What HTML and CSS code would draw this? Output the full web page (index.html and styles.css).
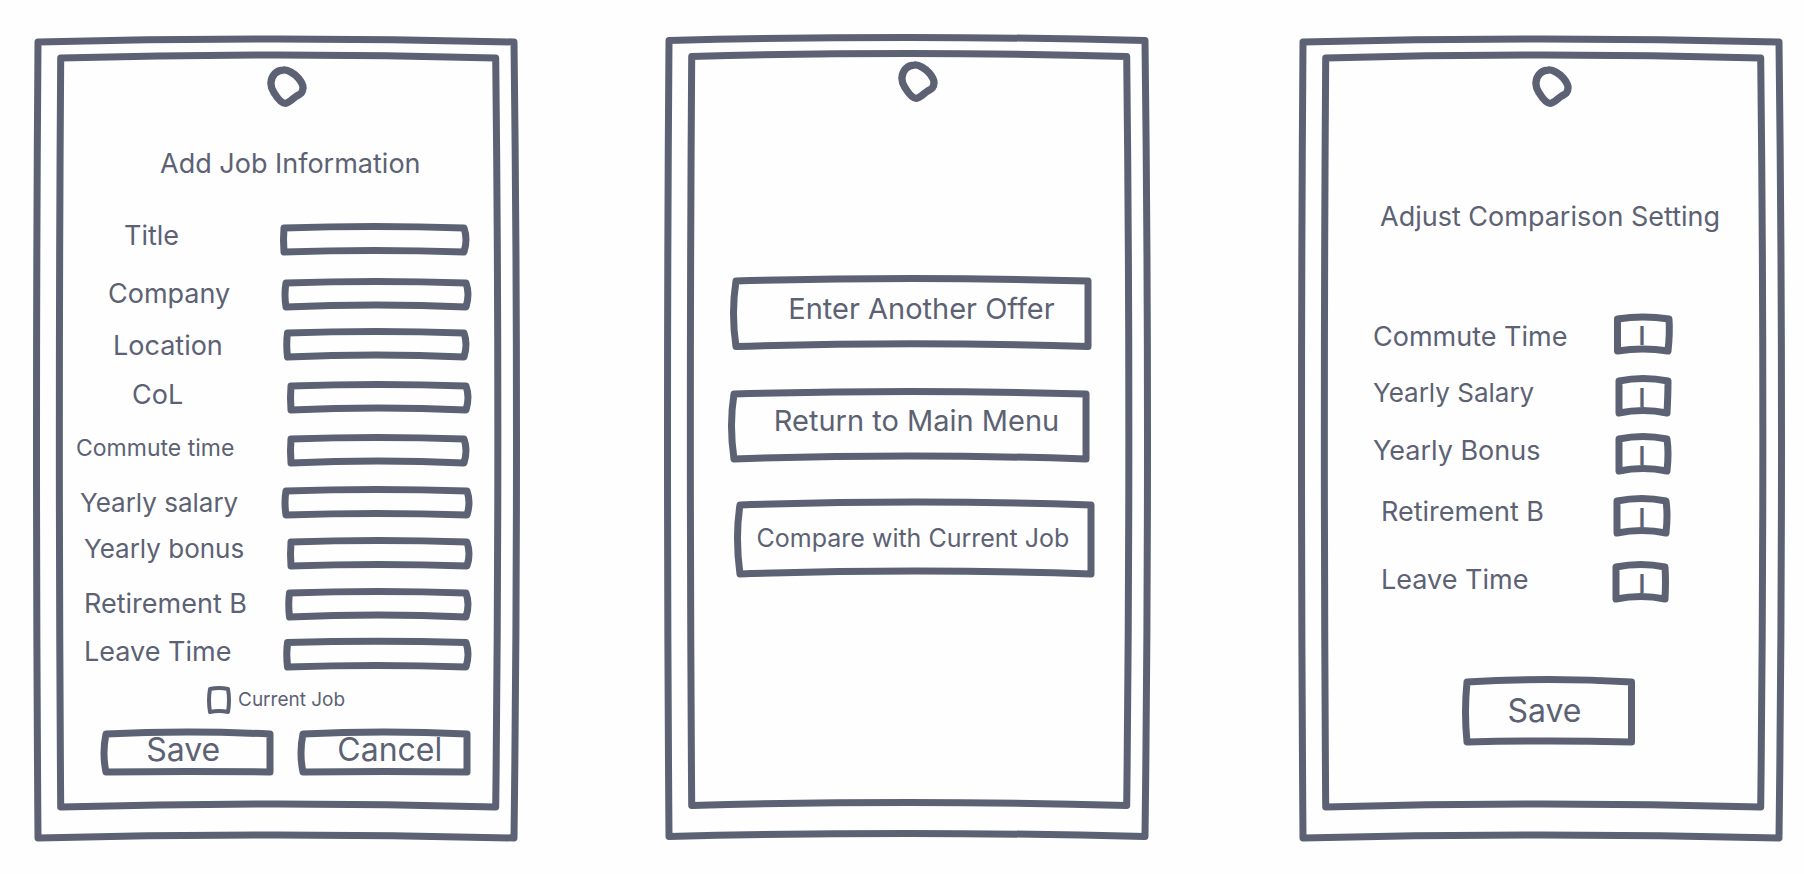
FILE: index.html
```html
<!DOCTYPE html>
<html lang="en">
<head>
<meta charset="utf-8">
<title>Job comparison wireframes</title>
<link rel="stylesheet" href="styles.css">
</head>
<body>
<main class="board">

<section class="phone">
  <svg class="sketch" viewBox="0 0 481 801" preserveAspectRatio="none" aria-hidden="true"><path d="M2,4Q241,-2 478,4Q483,400 478,800Q241,794 2,800Q-1,400 2,4Z"/><path d="M24.7,20Q242,14 459.7,20Q464,395 459.7,769Q242,763 24.7,769Q22,395 24.7,20Z"/></svg>
  <svg class="camera" viewBox="0 0 118 123" aria-hidden="true"><path d="M48,12C62,10 82,24 92,35C101,46 108,55 107,66C106,82 98,84 88,90C74,99 64,112 53,112C42,112 28,93 20,80C14,71 10,62 11,50C12,28 28,13 48,12Z"/></svg>
  <form class="job">
    <h1 class="title job-title">Add Job Information</h1>
    <div class="job-grid">
      <div class="job-labels">
        <label class="in-5" for="f1">Title</label>
        <label class="in-3" for="f2">Company</label>
        <label class="in-4" for="f3">Location</label>
        <label class="in-6" for="f4">CoL</label>
        <label class="small" for="f5">Commute time</label>
        <label class="in-1 medium" for="f6">Yearly salary</label>
        <label class="in-2 medium" for="f7">Yearly bonus</label>
        <label class="in-2" for="f8">Retirement B</label>
        <label class="in-2" for="f9">Leave Time</label>
      </div>
      <div class="job-fields">
        <div class="box"><svg class="sketch" viewBox="0 0 192 33" preserveAspectRatio="none" aria-hidden="true"><path d="M4,5Q94,2 184,5Q188,16 184,29Q94,26 4,29Q3,16 4,5Z"/></svg><input id="f1" type="text"></div>
        <div class="box"><svg class="sketch" viewBox="0 0 192 33" preserveAspectRatio="none" aria-hidden="true"><path d="M6,5Q96,2 186,5Q190,16 186,29Q96,25 6,29Q4,16 6,5Z"/></svg><input id="f2" type="text"></div>
        <div class="box"><svg class="sketch" viewBox="0 0 192 33" preserveAspectRatio="none" aria-hidden="true"><path d="M7.5,5Q96,2 184,5Q188,16 184,29Q96,25 7.5,29Q6,16 7.5,5Z"/></svg><input id="f3" type="text"></div>
        <div class="box"><svg class="sketch" viewBox="0 0 192 33" preserveAspectRatio="none" aria-hidden="true"><path d="M11,5Q98,2 186,5Q190,16 186,29Q98,25 11,29Q10,16 11,5Z"/></svg><input id="f4" type="text"></div>
        <div class="box"><svg class="sketch" viewBox="0 0 192 33" preserveAspectRatio="none" aria-hidden="true"><path d="M11,5Q98,2 184,5Q188,16 184,29Q98,25 11,29Q10,16 11,5Z"/></svg><input id="f5" type="text"></div>
        <div class="box"><svg class="sketch" viewBox="0 0 192 33" preserveAspectRatio="none" aria-hidden="true"><path d="M6,5Q96,2 187,5Q191,16 187,29Q96,26 6,29Q4,16 6,5Z"/></svg><input id="f6" type="text"></div>
        <div class="box"><svg class="sketch" viewBox="0 0 192 33" preserveAspectRatio="none" aria-hidden="true"><path d="M11,4Q98,1 187,4Q191,16 187,28Q98,25 11,28Q10,16 11,4Z"/></svg><input id="f7" type="text"></div>
        <div class="box"><svg class="sketch" viewBox="0 0 192 33" preserveAspectRatio="none" aria-hidden="true"><path d="M9.5,5Q98,2 186,5Q190,16 186,29Q98,25 9.5,29Q8,16 9.5,5Z"/></svg><input id="f8" type="text"></div>
        <div class="box"><svg class="sketch" viewBox="0 0 192 33" preserveAspectRatio="none" aria-hidden="true"><path d="M7.5,4.5Q96,2 186,4.5Q190,16 186,29Q96,26 7.5,29Q6,16 7.5,4.5Z"/></svg><input id="f9" type="text"></div>
      </div>
    </div>
    <div class="current">
      <span class="tick"><svg class="sketch" viewBox="0 0 24 28" preserveAspectRatio="none" aria-hidden="true"><path d="M3,3Q12,1 21,3Q23,14 21,26Q12,24 3,26Q1,14 3,3Z"/></svg><input id="cur" type="checkbox"></span>
      <label for="cur">Current Job</label>
    </div>
    <div class="actions">
      <button class="box save" type="button"><svg class="sketch" viewBox="0 0 173 47" preserveAspectRatio="none" aria-hidden="true"><path d="M5,5Q86,1 169.5,5L169.5,43Q86,42 5,43Q1,24 5,5Z"/></svg><span>Save</span></button>
      <button class="box cancel" type="button"><svg class="sketch" viewBox="0 0 173 47" preserveAspectRatio="none" aria-hidden="true"><path d="M5,5Q86,1 169.5,5L169.5,43Q86,42 5,43Q1,24 5,5Z"/></svg><span>Cancel</span></button>
    </div>
  </form>
</section>

<section class="phone">
  <svg class="sketch" viewBox="0 1.5 481 801" preserveAspectRatio="none" aria-hidden="true"><path d="M2,4Q241,-2 478,4Q483,400 478,800Q241,794 2,800Q-1,400 2,4Z"/><path d="M24.7,20Q242,14 459.7,20Q464,395 459.7,769Q242,763 24.7,769Q22,395 24.7,20Z"/></svg>
  <svg class="camera camera-high" viewBox="0 0 118 123" aria-hidden="true"><path d="M48,12C62,10 82,24 92,35C101,46 108,55 107,66C106,82 98,84 88,90C74,99 64,112 53,112C42,112 28,93 20,80C14,71 10,62 11,50C12,28 28,13 48,12Z"/></svg>
  <nav class="menu">
    <button class="box menu-item enter" type="button"><svg class="sketch" viewBox="0 0 366 76" preserveAspectRatio="none" aria-hidden="true"><path d="M7,6Q183,1 360,6L360,71.5Q183,66 7,71.5Q2,38 7,6Z"/></svg><span>Enter Another Offer</span></button>
    <button class="box menu-item return" type="button"><svg class="sketch" viewBox="0 0 366 76" preserveAspectRatio="none" aria-hidden="true"><path d="M5,7Q181,2 358,7L358,72Q181,66 5,72Q0,38 5,7Z"/></svg><span>Return to Main Menu</span></button>
    <button class="box menu-item compare" type="button"><svg class="sketch" viewBox="0 0 366 80" preserveAspectRatio="none" aria-hidden="true"><path d="M11,6Q187,0 363,6L363,75Q187,69 11,75Q6,38 11,6Z"/></svg><span>Compare with Current Job</span></button>
  </nav>
</section>

<section class="phone">
  <svg class="sketch" viewBox="0 0 481 801" preserveAspectRatio="none" aria-hidden="true"><path d="M2,4Q241,-2 478,4Q483,400 478,800Q241,794 2,800Q-1,400 2,4Z"/><path d="M24.7,20Q242,14 459.7,20Q464,395 459.7,769Q242,763 24.7,769Q22,395 24.7,20Z"/></svg>
  <svg class="camera" viewBox="0 0 118 123" aria-hidden="true"><path d="M48,12C62,10 82,24 92,35C101,46 108,55 107,66C106,82 98,84 88,90C74,99 64,112 53,112C42,112 28,93 20,80C14,71 10,62 11,50C12,28 28,13 48,12Z"/></svg>
  <form class="settings">
    <h1 class="title settings-title">Adjust Comparison Setting</h1>
    <div class="settings-grid">
      <div class="settings-labels">
        <label for="w1">Commute Time</label>
        <label class="medium" for="w2">Yearly Salary</label>
        <label for="w3">Yearly Bonus</label>
        <label class="in-2" for="w4">Retirement B</label>
        <label class="in-2" for="w5">Leave Time</label>
      </div>
      <div class="settings-fields">
        <div class="box weight"><svg class="sketch" viewBox="0 0 62 42" preserveAspectRatio="none" aria-hidden="true"><path d="M5.5,6Q31,2 57,6Q58,20 56,38Q31,34 5.5,38Z"/></svg><input id="w1" type="text" value="I"></div>
        <div class="box weight"><svg class="sketch" viewBox="0 0 62 42" preserveAspectRatio="none" aria-hidden="true"><path d="M7,6Q31,1 56,6Q56,20 55,38Q31,33 7,38Z"/></svg><input id="w2" type="text" value="I"></div>
        <div class="box weight"><svg class="sketch" viewBox="0 0 62 42" preserveAspectRatio="none" aria-hidden="true"><path d="M7,6Q31,1 55,6Q57,20 55,38Q31,33 7,38Z"/></svg><input id="w3" type="text" value="I"></div>
        <div class="box weight"><svg class="sketch" viewBox="0 0 62 42" preserveAspectRatio="none" aria-hidden="true"><path d="M5,6Q30,1 54,6Q56,20 54,38Q30,33 5,38Z"/></svg><input id="w4" type="text" value="I"></div>
        <div class="box weight"><svg class="sketch" viewBox="0 0 62 42" preserveAspectRatio="none" aria-hidden="true"><path d="M4,6Q29,1 53,6Q54,20 53,38Q29,33 4,38Z"/></svg><input id="w5" type="text" value="I"></div>
      </div>
    </div>
    <button class="box settings-save" type="button"><svg class="sketch" viewBox="0 0 173 70" preserveAspectRatio="none" aria-hidden="true"><path d="M5,6Q86,1 169.5,6L169.5,66Q86,64 5,66Q2,36 5,6Z"/></svg><span>Save</span></button>
  </form>
</section>

</main>
</body>
</html>
```
FILE: styles.css
```css
:root {
  --ink: #5c6274;
}

* {
  box-sizing: border-box;
}

body {
  margin: 0;
  background: #fefefe;
  color: var(--ink);
  font: 27px/34px Inter, "Liberation Sans", sans-serif;
}

.board {
  display: grid;
  grid-template-columns: minmax(0, 1fr) 150px minmax(0, 1fr) 153px minmax(0, 1fr);
  padding: 38px 22px 32px 36px;
}

.phone {
  position: relative;
  padding: 28px 0 63px;
}

.phone:nth-child(1) { grid-column: 1; }
.phone:nth-child(2) { grid-column: 3; }
.phone:nth-child(3) { grid-column: 5; }

.sketch {
  position: absolute;
  inset: 0;
  width: 100%;
  height: 100%;
  overflow: visible;
  pointer-events: none;
}

.sketch path {
  fill: none;
  stroke: var(--ink);
  stroke-width: 7px;
  stroke-linejoin: round;
  vector-effect: non-scaling-stroke;
}

.camera {
  display: block;
  width: 40px;
  height: 41px;
  margin-left: 48%;
}

.camera-high {
  margin-top: -5px;
}

.camera path {
  fill: none;
  stroke: var(--ink);
  stroke-width: 22px;
}

.title {
  margin: 0;
  font-size: 27px;
  font-weight: 400;
  white-space: nowrap;
}

label {
  white-space: nowrap;
}

input,
button {
  margin: 0;
  padding: 0;
  border: 0;
  background: none;
  color: inherit;
  font: inherit;
  outline: 0;
}

.box {
  position: relative;
}

.box input {
  display: block;
  width: 100%;
  height: 100%;
  padding: 0 12px;
}

/* Add job */

.job {
  padding: 40px 45px 0 40px;
}

.job-title {
  padding-left: 84px;
}

.job-grid {
  display: grid;
  grid-template-columns: 204px minmax(0, 1fr);
  padding-top: 38px;
}

.job-labels,
.job-fields {
  display: grid;
  align-items: start;
  align-content: start;
}

.job-labels {
  grid-template-rows: 58px 52px 49px 53px 55px 46px 55px 48px 34px;
}

.job-fields {
  grid-template-rows: 55px 50px 53px 53px 52px 52px 50px 50px 33px;
  padding-top: 4px;
}

.job-fields .box {
  height: 33px;
}

.small { font-size: 23px; }
.medium { font-size: 26px; }
.in-1 { padding-left: 4px; }
.in-2 { padding-left: 8px; }
.in-3 { padding-left: 32px; }
.in-4 { padding-left: 37px; }
.in-5 { padding-left: 48px; }
.in-6 { padding-left: 56px; }

.current {
  display: flex;
  gap: 7px;
  padding: 15px 0 15px 131px;
  font-size: 19px;
  line-height: 28px;
}

.tick {
  position: relative;
  width: 24px;
  height: 28px;
}

.tick .sketch path {
  stroke-width: 4px;
}

.tick input {
  display: block;
  width: 100%;
  height: 100%;
  appearance: none;
}

.actions {
  display: grid;
  grid-template-columns: 1fr 1fr;
  gap: 24px;
  padding: 0 2px 0 25px;
}

.actions .box {
  height: 47px;
  padding-bottom: 6px;
  font-size: 32px;
}

.save { padding-right: 8px; }
.cancel { padding-left: 12px; }

/* Menu */

.menu {
  display: grid;
  gap: 36px;
  padding: 173px 54px 0 62px;
}

.menu-item {
  height: 76px;
  padding: 0;
  font-size: 29px;
}

.enter {
  padding: 0 0 8px 20px;
}

.return {
  padding: 0 0 8px 10px;
}

.compare {
  height: 80px;
  padding: 0 0 3px 3px;
  font-size: 25px;
}

/* Settings */

.settings {
  padding: 93px 45px 0 72px;
}

.settings-title {
  padding-left: 7px;
}

.settings-grid {
  display: grid;
  grid-template-columns: minmax(0, 1fr) 62px;
  padding: 79px 63px 0 0;
}

.settings-labels,
.settings-fields {
  display: grid;
  align-items: start;
  align-content: start;
}

.settings-labels {
  grid-template-rows: 56px 58px 61px 68px 34px;
  padding-top: 7px;
}

.settings-fields {
  grid-template-rows: 62px 58px 62px 66px 42px;
}

.weight {
  height: 42px;
}

.weight input {
  padding: 4px 2px 0 0;
  font-size: 25px;
  font-weight: 600;
  text-align: center;
}

.settings-save {
  display: block;
  width: 173px;
  height: 70px;
  margin: 73px 0 0 89px;
  padding: 0 8px 1px 0;
  font-size: 32px;
}
```
